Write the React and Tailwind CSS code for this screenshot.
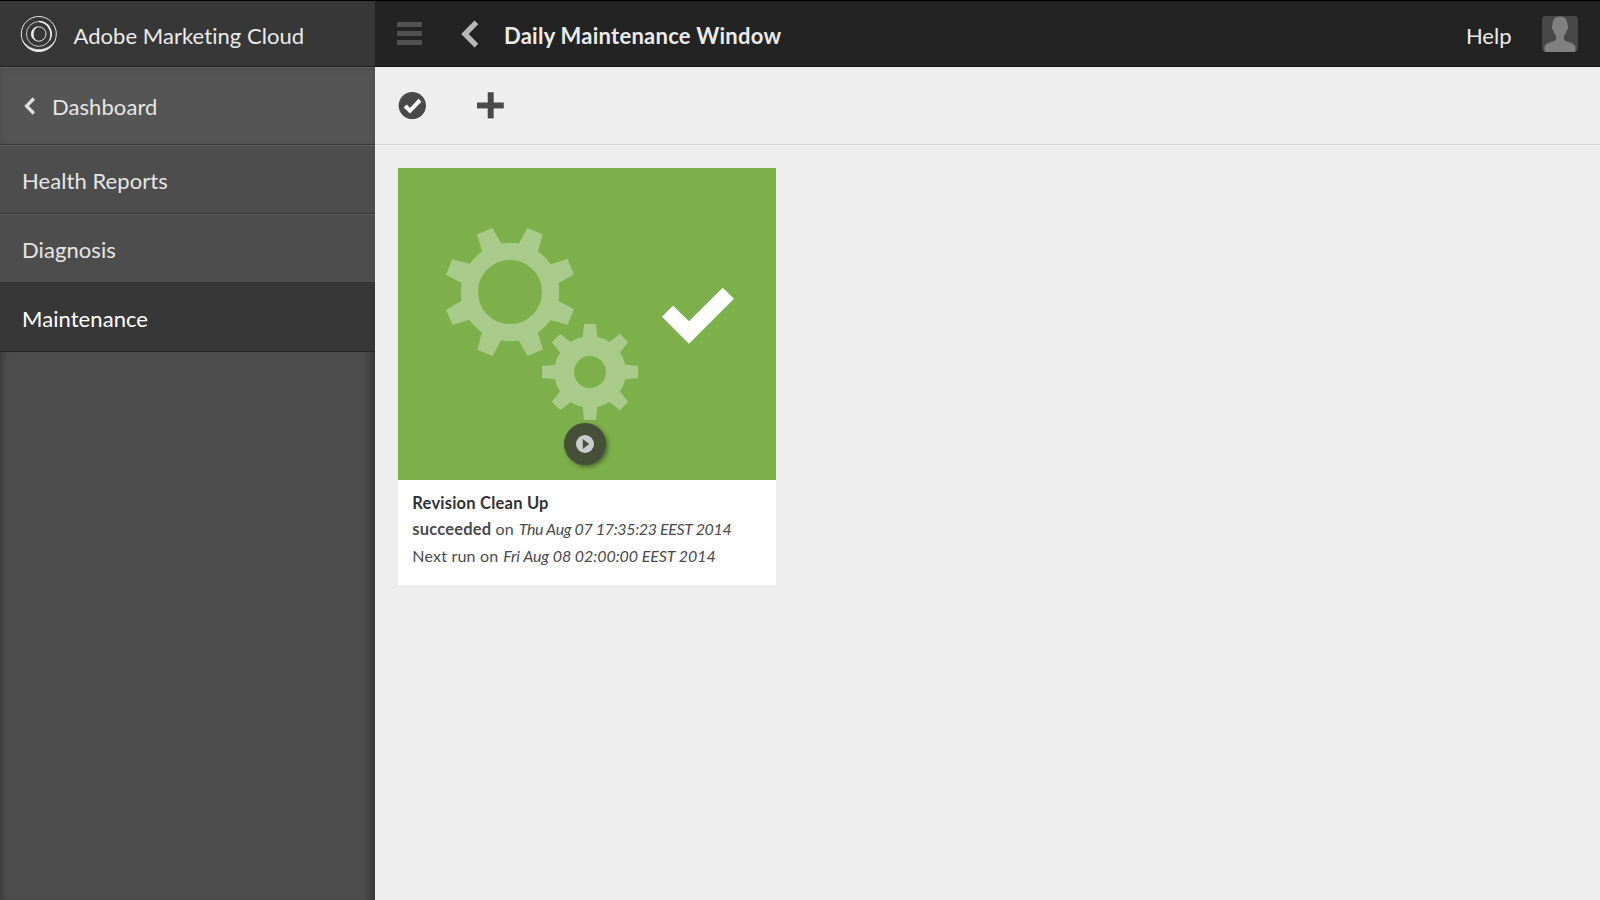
function CloudLogo() {
  return (
    <svg width="38" height="38" viewBox="0 0 38 38" fill="none" stroke="#e8e8e8" className="mt-[1px] shrink-0">
      <circle cx="18.8" cy="19" r="17.5" strokeWidth="1" />
      <circle cx="18.8" cy="19" r="12.4" strokeWidth="0.8" />
      <circle cx="18.8" cy="19" r="7.2" strokeWidth="1" />
      <path d="M2.6 25.5A17.6 17.6 0 0 0 35.2 25.5A19.2 19.2 0 0 1 2.6 25.5Z" fill="#e8e8e8" strokeWidth="0.6" />
      <path d="M18.8 6.4A12.6 12.6 0 0 1 29.6 25.4A13.4 13.4 0 0 0 18.8 6.4Z" fill="#e8e8e8" strokeWidth="1.1" />
      <path d="M16.8 12.1A7.2 7.2 0 0 0 15.4 25.3A8.8 8.8 0 0 1 16.8 12.1Z" fill="#e8e8e8" strokeWidth="1" />
    </svg>
  );
}

const TEETH = [0, 45, 90, 135, 180, 225, 270, 315];

function Gears() {
  return (
    <svg width="192" height="192" viewBox="0 0 192 192" fill="#a9cb89" className="shrink-0">
      <circle cx="64" cy="64" r="40.6" fill="none" stroke="#a9cb89" strokeWidth="17.2" />
      {TEETH.map((a) => (
        <polygon key={a} points="8.3,-47 17.3,-64 32.7,-57.7 27.7,-39" transform={"translate(64 64) rotate(" + a + ")"} />
      ))}
      <circle cx="144" cy="144" r="25.9" fill="none" stroke="#a9cb89" strokeWidth="19.8" />
      {TEETH.map((a) => (
        <polygon key={a} points="-7.5,-33 -6,-48 6,-48 7.5,-33" transform={"translate(144 144) rotate(" + a + ")"} />
      ))}
    </svg>
  );
}

function NavItem({ label, active }) {
  return (
    <div
      className={
        active
          ? "flex h-[69px] items-center border-b border-[#262626] bg-[#373737] pl-[22px] pt-[4px] tracking-[0.07px] text-white"
          : "flex h-[69px] items-center border-t border-b border-t-[#616161] border-b-[#363636] pl-[22px] pt-[3px] tracking-[0.07px] text-[#e6e6e6]"
      }
    >
      {label}
    </div>
  );
}

function Sidebar() {
  return (
    <aside className="flex w-[375px] shrink-0 flex-col bg-[#4d4d4d]">
      <div className="flex h-[67px] items-center gap-[15.5px] border-t border-b border-t-black border-b-[#202020] bg-[#373737] pl-[20px] text-[#ebebeb]">
        <CloudLogo />
        <span className="pt-[4px] tracking-[0.05px]">Adobe Marketing Cloud</span>
      </div>
      <div className="flex h-[78px] items-center border-t border-b border-t-[#626262] border-b-[#363636] bg-[#555555] pl-[24px] text-[#e6e6e6] shadow-[inset_0_0_6px_rgba(0,0,0,0.12)]">
        <svg width="12" height="18" viewBox="0 0 12 18" fill="#e0e0e0">
          <path d="M0.2 9L8.7 0.3L11 2.7L4.9 9L11 15.3L8.7 17.7Z" />
        </svg>
        <span className="pl-[16px] pt-[2px] tracking-[0.07px]">Dashboard</span>
      </div>
      <NavItem label="Health Reports" />
      <NavItem label="Diagnosis" />
      <NavItem label="Maintenance" active />
      <div className="flex-1 shadow-[inset_10px_0_10px_-10px_rgba(0,0,0,0.4),inset_-12px_0_12px_-10px_rgba(0,0,0,0.45)]" />
    </aside>
  );
}

function TopBar() {
  return (
    <header className="flex h-[67px] items-center border-t border-b border-t-black border-b-[#191919] bg-[#232323] text-[#ebebeb]">
      <svg width="25" height="23" viewBox="0 0 25 23" className="ml-[22px]">
        <path d="M0 0H25V5H0ZM0 9H25V14H0ZM0 18H25V23H0Z" fill="#515151" />
      </svg>
      <svg width="18" height="28" viewBox="0 0 18 28" className="ml-[39px]">
        <path d="M0.2 14L13.5 0.5L17.3 4.3L7.7 14L17.3 23.7L13.5 27.5Z" fill="#b8b8b8" />
      </svg>
      <h1 className="ml-[25px] pt-[4px] font-bold tracking-[0.25px]">Daily Maintenance Window</h1>
      <div className="ml-auto flex items-center gap-[30.5px] pr-[22px]">
        <span className="pt-[4px]">Help</span>
        <svg width="36" height="36" viewBox="0 0 36 36">
          <rect width="36" height="36" rx="4" fill="#484848" />
          <path d="M18 0.6C22.8 0.6 25.6 4 25.4 9C26.8 9.6 26.2 13.4 24.8 14.2C24.2 17 23 18.6 21.9 20C21.6 23.6 22.2 24.6 25 25.6C29.4 27.2 33.4 27.6 33.6 32.6V34Q33.6 36 31.6 36H4.4Q2.4 36 2.4 34V32.6C2.6 27.6 6.6 27.2 11 25.6C13.8 24.6 14.4 23.6 14.1 20C13 18.6 11.8 17 11.2 14.2C9.8 13.4 9.2 9.6 10.6 9C10.4 4 13.2 0.6 18 0.6Z" fill="#808080" />
        </svg>
      </div>
    </header>
  );
}

function Toolbar() {
  return (
    <div className="flex h-[78px] items-center border-b border-[#d5d5d5] pl-[23px]">
      <svg width="29" height="30" viewBox="0 0 29 30">
        <circle cx="14.3" cy="15.5" r="13.7" fill="#fff" />
        <circle cx="14.3" cy="14.6" r="13.7" fill="#4a4a4a" />
        <path d="M5.7 16.6L8.7 13.6L12 17L20.6 7.8L23.4 10.7L12 22.6Z" fill="#fff" />
      </svg>
      <svg width="28" height="30" viewBox="0 0 28 30" className="ml-[50px]">
        <path d="M10.7 2H16.7V12.3H26.8V18.2H16.7V29H10.7V18.2H0V12.3H10.7Z" fill="#fff" />
        <path d="M10.7 1.2H16.7V11.4H26.8V17.4H16.7V27.6H10.7V17.4H0V11.4H10.7Z" fill="#4a4a4a" />
      </svg>
    </div>
  );
}

function TaskCard() {
  return (
    <article className="w-[378px] bg-white">
      <div className="relative flex h-[312px] bg-[#7daf4b] pl-[48px] pt-[60px]">
        <Gears />
        <svg width="72" height="57" viewBox="0 0 72 57" fill="#fff" className="ml-[24px] mt-[59px]">
          <path d="M0 29.8L11 18.7L27 34.3L60.7 0.7L72 11.7L27 56.8Z" />
        </svg>
        <button className="absolute left-[166px] top-[255px] flex h-[42px] w-[42px] items-center justify-center rounded-full bg-[#455036] shadow-[2px_2px_4px_rgba(0,0,0,0.4)]">
          <svg width="18" height="18" viewBox="0 0 18 18">
            <circle cx="9" cy="9" r="9" fill="#cccccc" />
            <path d="M6.8 4L13.2 9L6.8 14Z" fill="#455036" />
          </svg>
        </button>
      </div>
      <div className="h-[105px] pl-[14.3px] pt-[10px] text-base leading-[26.3px] text-[#4a4a4a]">
        <h2 className="text-[16.5px] font-bold tracking-[0.22px] text-[#323232]">Revision Clean Up</h2>
        <p className="whitespace-nowrap">
          <b className="text-[16.5px] tracking-[0.2px]">succeeded</b> <span className="tracking-[0.15px]">on</span>{" "}
          <i className="pl-[0.7px] tracking-[-0.35px]">Thu Aug 07 17:35:23 EEST 2014</i>
        </p>
        <p className="whitespace-nowrap">
          <span className="tracking-[0.2px]">Next run on</span> <i className="pl-[0.7px] tracking-[-0.06px]">Fri Aug 08 02:00:00 EEST 2014</i>
        </p>
      </div>
    </article>
  );
}

export default function App() {
  return (
    <div className="flex h-[900px] w-[1600px] overflow-hidden bg-[#eeeeee] font-[Lato,'Noto_Sans',sans-serif] text-[22px] leading-[26px] [font-variant-ligatures:none]">
      <Sidebar />
      <div className="flex flex-1 flex-col">
        <TopBar />
        <Toolbar />
        <main className="flex-1 pl-[23px] pt-[23px]">
          <TaskCard />
        </main>
      </div>
    </div>
  );
}
